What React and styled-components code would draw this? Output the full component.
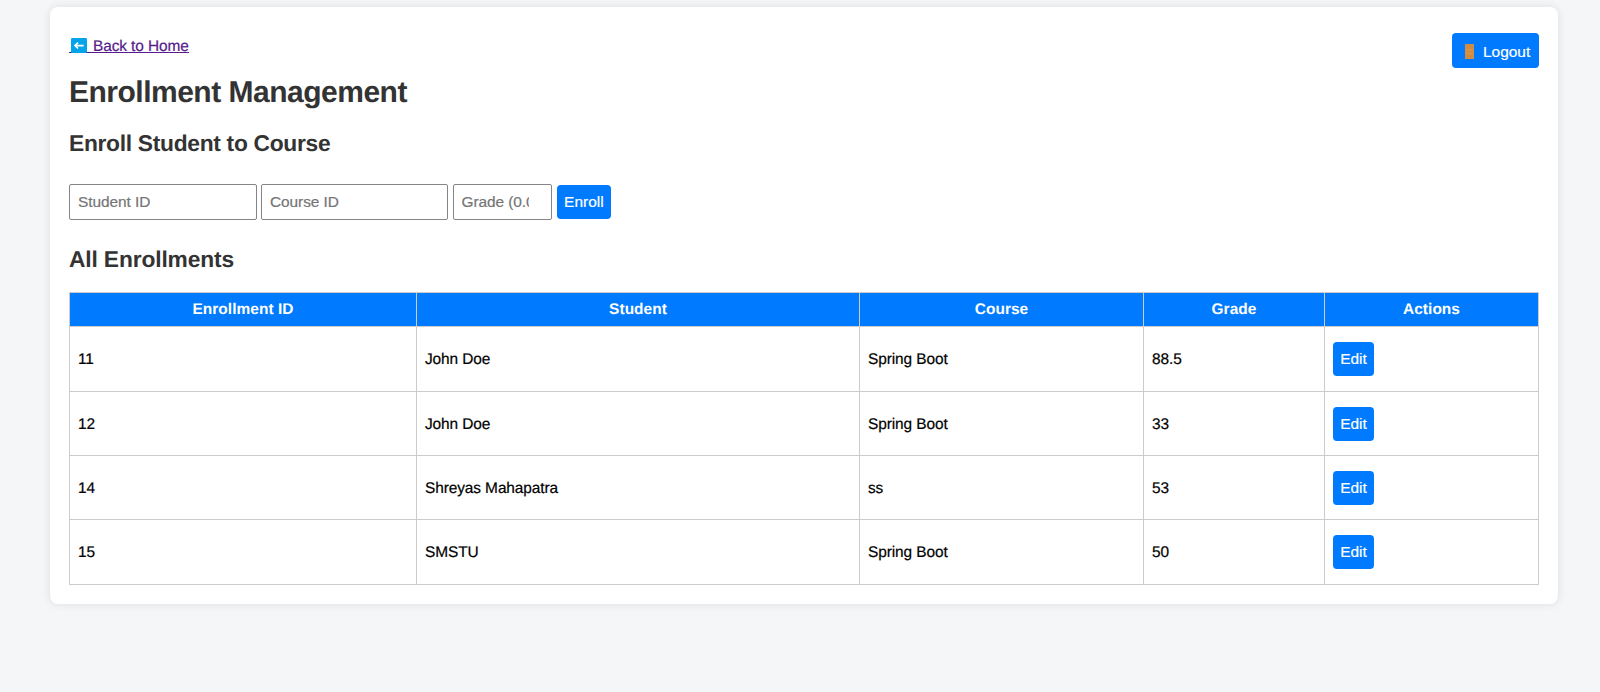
import React from "react";
import styled, { createGlobalStyle } from "styled-components";

const GlobalStyle = createGlobalStyle`
  * { box-sizing: border-box; }
  body {
    margin: 0;
    min-height: 692px;
    background: #f4f6f8;
    color: #000;
    font: 15.45px/18px "Liberation Sans", Arial, sans-serif;
    text-rendering: geometricPrecision;
  }
`;

const Page = styled.div`
  display: flex;
  padding: 7px 0 0 50px;
`;

const Card = styled.main`
  width: 1508px;
  height: 597px;
  padding: 26px 19px 0 19px;
  background: #fff;
  border-radius: 8px;
  box-shadow: 0 0 10px rgba(0, 0, 0, 0.1);
`;

const TopBar = styled.header`
  display: flex;
  justify-content: space-between;
  align-items: flex-start;
  height: 42px;
`;

const BackLink = styled.a`
  display: flex;
  align-items: flex-end;
  height: 17px;
  margin-top: 3px;
  padding-left: 2px;
  border-bottom: 1px solid #551a8b;
  color: #551a8b;
  text-decoration: none;
  letter-spacing: -0.1px;
  line-height: 10px;
  -webkit-text-stroke: 0.2px;

  svg { margin: 0 6px -1px 0; }
`;

const Button = styled.button`
  display: flex;
  align-items: center;
  justify-content: center;
  width: ${(p) => p.$width}px;
  height: 34px;
  padding: 0;
  border: 0;
  border-radius: 4px;
  background: #007bff;
  color: #fff;
  font: inherit;
  -webkit-text-stroke: 0.2px;
`;

const LogoutButton = styled(Button)`
  justify-content: flex-start;
  gap: 9px;
  height: 35px;
  padding: 2px 0 0 13px;
`;

const Title = styled.h1`
  margin: 0;
  color: #333;
  font-size: 30px;
  line-height: 36px;
  letter-spacing: -0.5px;
`;

const Subtitle = styled.h2`
  margin: ${(p) => p.$top}px 0 0;
  color: #333;
  font-size: 22.8px;
  line-height: 28px;
  letter-spacing: ${(p) => p.$spacing}px;
`;

const EnrollForm = styled.form`
  display: flex;
  align-items: center;
  gap: 4.5px;
  margin-top: 27px;
`;

const Field = styled.input`
  width: ${(p) => p.$width}px;
  height: 36px;
  padding: 0 ${(p) => p.$right || 8}px 0 8px;
  border: 1px solid #858585;
  border-radius: 2px;
  background: #fff;
  font: inherit;
  letter-spacing: -0.07px;

  &::placeholder { color: #757575; -webkit-text-stroke: 0.2px; }
`;

const Table = styled.table`
  width: 1470px;
  margin-top: 19px;
  border-collapse: collapse;
  table-layout: fixed;
`;

const HeadCell = styled.th`
  width: ${(p) => p.$width}px;
  height: 34px;
  padding: 1px 0 0;
  border: 1px solid #ccc;
  background: #007bff;
  color: #fff;
  letter-spacing: 0.05px;
`;

const Row = styled.tr`
  height: ${(p) => p.$height}px;
`;

const Cell = styled.td`
  padding: 2px 8px 0;
  border: 1px solid #ccc;
  letter-spacing: -0.1px;
  -webkit-text-stroke: 0.2px;
`;

const ActionCell = styled(Cell)`
  padding-top: 0;
  letter-spacing: 0;
`;

const columns = [
  ["Enrollment ID", 347],
  ["Student", 443],
  ["Course", 284],
  ["Grade", 181],
  ["Actions", 214],
];

const enrollments = [
  { id: 11, student: "John Doe", course: "Spring Boot", grade: "88.5", height: 65 },
  { id: 12, student: "John Doe", course: "Spring Boot", grade: "33", height: 64 },
  { id: 14, student: "Shreyas Mahapatra", course: "ss", grade: "53", height: 64 },
  { id: 15, student: "SMSTU", course: "Spring Boot", grade: "50", height: 65 },
];

const BackIcon = () => (
  <svg width="16" height="15" viewBox="0 0 16 15">
    <rect width="16" height="15" rx="1.2" fill="#05a4ea" />
    <path d="M12.7 7.6H4M7 4.7L4 7.6l3 2.9" fill="none" stroke="#fff" strokeWidth="1.6" />
  </svg>
);

const DoorIcon = () => (
  <svg width="9" height="15" viewBox="0 0 9 15">
    <rect width="9" height="15" fill="#d08b45" />
    <path d="M1 5.8h7M1 9.2h7" stroke="#e59a4a" strokeWidth="1" />
  </svg>
);

export default function App() {
  return (
    <Page>
      <GlobalStyle />
      <Card>
        <TopBar>
          <BackLink href="#">
            <BackIcon />
            Back to Home
          </BackLink>
          <LogoutButton $width={87}>
            <DoorIcon />
            Logout
          </LogoutButton>
        </TopBar>
        <Title>Enrollment Management</Title>
        <Subtitle $top={18} $spacing={-0.3}>Enroll Student to Course</Subtitle>
        <EnrollForm>
          <Field $width={187.5} placeholder="Student ID" />
          <Field $width={187} placeholder="Course ID" />
          <Field $width={99.5} $right={22} placeholder="Grade (0.0-100.0)" />
          <Button $width={54.7} type="button">Enroll</Button>
        </EnrollForm>
        <Subtitle $top={25} $spacing={-0.15}>All Enrollments</Subtitle>
        <Table>
          <thead>
            <tr>
              {columns.map(([name, width]) => (
                <HeadCell key={name} $width={width}>{name}</HeadCell>
              ))}
            </tr>
          </thead>
          <tbody>
            {enrollments.map((e) => (
              <Row key={e.id} $height={e.height}>
                <Cell>{e.id}</Cell>
                <Cell>{e.student}</Cell>
                <Cell>{e.course}</Cell>
                <Cell>{e.grade}</Cell>
                <ActionCell>
                  <Button $width={41}>Edit</Button>
                </ActionCell>
              </Row>
            ))}
          </tbody>
        </Table>
      </Card>
    </Page>
  );
}
